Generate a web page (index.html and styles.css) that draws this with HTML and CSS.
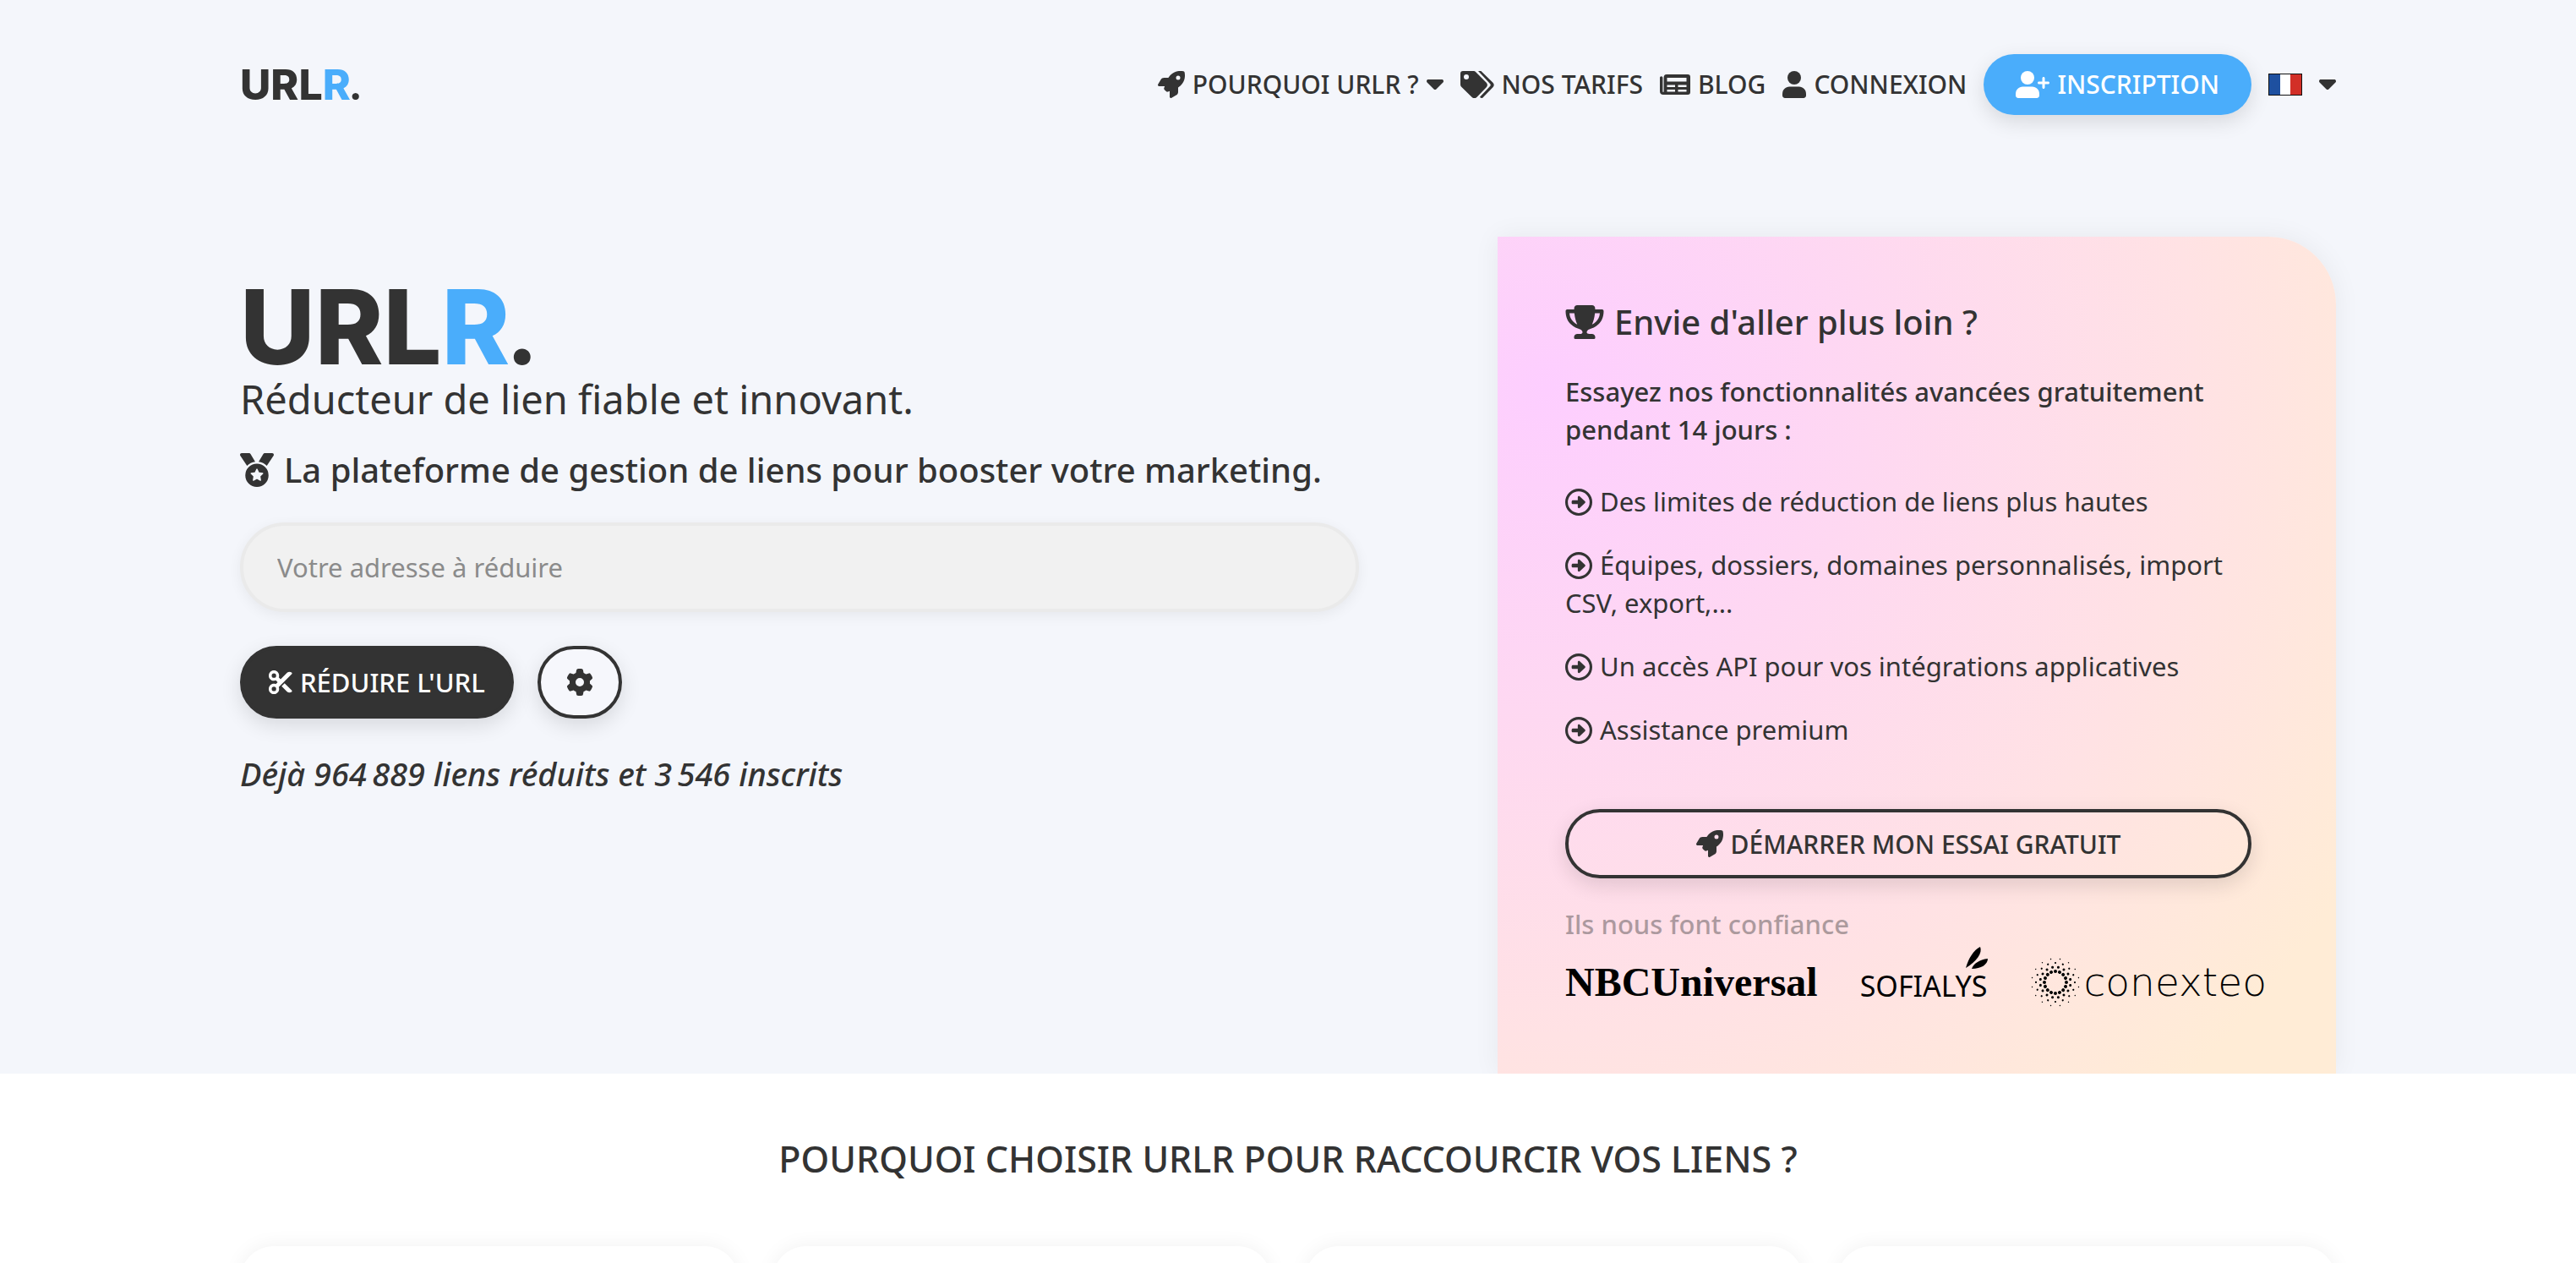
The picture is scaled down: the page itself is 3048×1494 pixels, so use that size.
FILE: index.html
```html
<!DOCTYPE html>
<html lang="fr">
<head>
<meta charset="utf-8">
<meta name="viewport" content="width=device-width, initial-scale=1">
<title>URLR — Réducteur de lien fiable et innovant</title>
<link rel="stylesheet" href="styles.css">
</head>
<body>
<svg class="sprite" aria-hidden="true">
  <symbol id="rocket" viewBox="0 0 512 512"><path d="M156.600 384.900L125.700 354c-8.500-8.500-11.500-20.800-7.700-32.200c3-8.900 7-20.500 11.800-33.800L24 288c-8.600 0-16.600-4.600-20.900-12.100s-4.200-16.700 .2-24.100l52.500-88.500c13-21.900 36.500-35.300 61.900-35.300l82.300 0c2.400-4 4.800-7.700 7.200-11.300C289.100-4.100 411.100-8.100 483.900 5.300c11.600 2.100 20.600 11.200 22.800 22.800c13.400 72.900 9.300 194.800-111.400 276.700c-3.500 2.400-7.300 4.800-11.300 7.200v82.300c0 25.400-13.400 49-35.300 61.900l-88.500 52.500c-7.400 4.400-16.600 4.500-24.100 .2s-12.100-12.200-12.100-20.900V380.800c-14.100 4.900-26.400 8.900-35.700 11.900c-11.200 3.600-23.400 .5-31.800-7.800zM384 168a40 40 0 1 0 0-80 40 40 0 1 0 0 80z"/></symbol>
  <symbol id="caret" viewBox="0 0 320 192"><path d="M137.400 182.600c12.500 12.500 32.800 12.500 45.300 0l128-128c9.200-9.200 11.900-22.900 6.900-34.900S301 0 288 0H32C19.100 0 7.400 7.800 2.400 19.800s-2.200 25.700 6.900 34.900z"/></symbol>
  <symbol id="tags" viewBox="0 0 40 32"><path fill-rule="evenodd" d="M3 0h12c1.500 0 2.500.4 3.500 1.400l12 12c1.900 1.900 1.900 4.300 0 6.200L19.600 30.800c-1.900 1.900-4.300 1.900-6.200 0L1.400 19C.4 18 0 17 0 15.500V3c0-2 1-3 3-3zm4 4a3 3 0 1 0 0 6 3 3 0 0 0 0-6z"/><path d="M21 0h3.400l13.800 13.500c2 2 2 4.100 0 6.100L26.500 31.400c-1 1-3 .6-3.500-.6L35 18c1-1 1-2 0-3z"/></symbol>
  <symbol id="news" viewBox="0 0 36 24"><path fill-rule="evenodd" d="M8 0h25c2 0 3 1 3 3v18c0 2-1 3-3 3H4c-2.500 0-4-1.500-4-4V4c0-1 .8-1.700 1.700-1.700S3.400 3 3.400 4v16c0 .7.200 1 .6 1s.6-.3.600-1V4c0-2.500 1-4 3.400-4zM8.500 4v4.500h23V4zm0 8.500V15h9.500v-2.500zm13 0V15h10v-2.500zM8.500 18v2.500h9.500V18zm13 0v2.500h10V18z"/></symbol>
  <symbol id="user" viewBox="0 0 448 512"><circle cx="224" cy="128" r="128"/><path d="M134 296h180c74 0 134 60 134 134v34c0 26.500-21.500 48-48 48H48c-26.500 0-48-21.500-48-48v-34c0-74 60-134 134-134z"/></symbol>
  <symbol id="user-plus" viewBox="0 0 640 512"><circle cx="224" cy="128" r="128"/><path d="M134 296h180c74 0 134 60 134 134v34c0 26.500-21.500 48-48 48H48c-26.500 0-48-21.500-48-48v-34c0-74 60-134 134-134z"/><path d="M504 312V248H440c-13.300 0-24-10.700-24-24s10.700-24 24-24h64V136c0-13.300 10.700-24 24-24s24 10.700 24 24v64h64c13.300 0 24 10.700 24 24s-10.700 24-24 24H552v64c0 13.300-10.700 24-24 24s-24-10.700-24-24z"/></symbol>
  <symbol id="medal" viewBox="0 0 512 512"><path d="M4.100 38.200C1.400 34.200 0 29.400 0 24.600C0 11 11 0 24.600 0H133.900c11.200 0 21.700 5.900 27.400 15.500l68.500 114.100c-48.200 6.100-91.300 28.600-123.400 61.900L4.100 38.200zm503.700 0L405.600 191.500c-32.100-33.300-75.200-55.800-123.400-61.900L350.700 15.500C356.500 5.900 366.900 0 378.100 0H487.400C501 0 512 11 512 24.600c0 4.800-1.400 9.600-4.100 13.600zM80 336a176 176 0 1 1 352 0A176 176 0 1 1 80 336zm184.400-94.900c-3.400-7-13.300-7-16.800 0l-22.400 45.400c-1.400 2.800-4 4.700-7 5.100L168 298.900c-7.700 1.100-10.700 10.500-5.200 16l36.300 35.400c2.200 2.200 3.200 5.200 2.700 8.300l-8.600 49.900c-1.300 7.600 6.700 13.500 13.600 9.900l44.800-23.600c2.700-1.400 6-1.400 8.700 0l44.800 23.600c6.900 3.600 14.900-2.200 13.600-9.900l-8.600-49.900c-.5-3 .5-6.100 2.700-8.300l36.300-35.400c5.600-5.400 2.500-14.800-5.200-16l-50.100-7.300c-3-.4-5.700-2.400-7-5.100z"/></symbol>
  <symbol id="scissors" viewBox="0 0 512 512"><path fill-rule="evenodd" d="M256 192l-39.500-39.500c4.900-12.600 7.500-26.200 7.500-40.500C224 50.100 173.900 0 112 0S0 50.100 0 112s50.100 112 112 112c14.300 0 27.900-2.700 40.500-7.500L192 256l-39.500 39.500c-12.600-4.900-26.200-7.500-40.500-7.500C50.100 288 0 338.100 0 400s50.100 112 112 112s112-50.100 112-112c0-14.300-2.700-27.900-7.500-40.500L499.200 76.800c7.100-7.100 7.100-18.500 0-25.600c-28.300-28.300-74.100-28.300-102.400 0zm22.600 150.600L396.800 460.800c28.300 28.300 74.100 28.300 102.400 0c7.100-7.100 7.100-18.500 0-25.600L342.600 278.600zM64 112a48 48 0 1 1 96 0 48 48 0 1 1-96 0zm48 240a48 48 0 1 1 0 96 48 48 0 1 1 0-96z"/></symbol>
  <symbol id="gear" viewBox="0 0 512 512"><path d="M495.900 166.600c3.200 8.700 .5 18.400-6.400 24.600l-43.300 39.400c1.100 8.300 1.700 16.800 1.700 25.400s-.6 17.100-1.700 25.400l43.300 39.400c6.900 6.200 9.600 15.900 6.400 24.600c-4.400 11.900-9.700 23.300-15.800 34.300l-4.700 8.100c-6.600 11-14 21.400-22.100 31.200c-5.900 7.200-15.700 9.600-24.500 6.800l-55.700-17.700c-13.400 10.300-28.200 18.900-44 25.400l-12.500 57.100c-2 9.100-9 16.300-18.200 17.800c-13.800 2.300-28 3.500-42.500 3.500s-28.700-1.200-42.500-3.500c-9.200-1.500-16.200-8.700-18.200-17.800l-12.500-57.100c-15.800-6.500-30.600-15.100-44-25.400L83.100 425.900c-8.800 2.800-18.600 .3-24.500-6.800c-8.100-9.800-15.500-20.200-22.100-31.200l-4.700-8.100c-6.100-11-11.400-22.400-15.800-34.300c-3.200-8.700-.5-18.400 6.400-24.600l43.300-39.400C64.600 273.100 64 264.600 64 256s.6-17.100 1.700-25.400L22.400 191.200c-6.900-6.200-9.600-15.900-6.400-24.600c4.400-11.900 9.700-23.300 15.800-34.300l4.700-8.100c6.600-11 14-21.400 22.100-31.200c5.900-7.200 15.700-9.600 24.500-6.800l55.700 17.700c13.400-10.300 28.200-18.900 44-25.400l12.500-57.100c2-9.100 9-16.300 18.200-17.800C227.300 1.200 241.500 0 256 0s28.700 1.200 42.500 3.500c9.200 1.500 16.200 8.700 18.200 17.800l12.500 57.100c15.800 6.500 30.600 15.100 44 25.400l55.700-17.700c8.800-2.800 18.600-.3 24.500 6.800c8.100 9.800 15.500 20.200 22.100 31.200l4.700 8.100c6.100 11 11.400 22.400 15.800 34.300zM256 336a80 80 0 1 0 0-160 80 80 0 1 0 0 160z"/></symbol>
  <symbol id="trophy" viewBox="0 0 576 512"><path d="M400 0H176c-26.500 0-48.100 21.800-47.100 48.200c.2 5.300 .4 10.600 .7 15.800H24C10.700 64 0 74.700 0 88c0 92.600 33.500 157 78.500 200.700c44.300 43.100 98.300 64.800 138.100 75.800c23.400 6.500 39.400 26 39.400 45.600c0 20.900-17 25-37.900 25H180c-30 0-52 20-52 45v16c0 10 7 16 16 16H432c9 0 16-6 16-16v-16c0-25-22-45-52-45H357.900C337 435 320 431 320 410.100c0-19.600 15.900-39.200 39.400-45.600c39.900-11 93.900-32.700 138.200-75.800C542.500 245 576 180.600 576 88c0-13.300-10.700-24-24-24H446.400c.3-5.200 .5-10.400 .7-15.800C448.100 21.800 426.500 0 400 0zM58 122h74c9.100 80 26 130 44 168c-20-11-40-22-60-42c-32-31-54-66-58-126zM460 248c-20 20-40 31-60 42c18-38 35-88 44-168h74c-4 60-26 95-58 126z"/></symbol>
  <symbol id="arrow" viewBox="0 0 512 512"><path fill-rule="evenodd" d="M256 0a256 256 0 1 1 0 512 256 256 0 0 1 0-512zm0 50a206 206 0 1 0 0 412 206 206 0 0 0 0-412z"/><path d="M276 148l98 92c10 9 10 23 0 32l-98 92c-15 14-38 6-38-16v-56H148c-15 0-26-11-26-26v-20c0-15 11-26 26-26h90v-56c0-22 23-30 38-16z"/></symbol>
</svg>

<div class="hero">
  <header class="topbar wrap">
    <a class="logo logo-small" href="#">URL<span class="logo-accent">R</span><span class="logo-dot">.</span></a>
    <nav class="nav" aria-label="Navigation principale">
      <a class="nav-link" href="#"><svg class="icon"><use href="#rocket"/></svg>POURQUOI URLR ?<svg class="caret"><use href="#caret"/></svg></a>
      <a class="nav-link" href="#"><svg class="icon icon-wide"><use href="#tags"/></svg>NOS TARIFS</a>
      <a class="nav-link" href="#"><svg class="icon icon-news"><use href="#news"/></svg>BLOG</a>
      <a class="nav-link" href="#"><svg class="icon icon-narrow"><use href="#user"/></svg>CONNEXION</a>
      <a class="nav-link signup" href="#"><svg class="icon icon-wide"><use href="#user-plus"/></svg>INSCRIPTION</a>
      <a class="lang" href="#" aria-label="Français"><svg class="flag" viewBox="0 0 40 26"><rect width="40" height="26" fill="#111"/><rect x="1" y="1" width="13" height="24" fill="#1e50a0"/><rect x="14" y="1" width="12" height="24" fill="#fff"/><rect x="26" y="1" width="13" height="24" fill="#d22f27"/></svg><svg class="caret"><use href="#caret"/></svg></a>
    </nav>
  </header>

  <main class="intro wrap">
    <section class="shorten">
      <h1 class="heading"><span class="logo logo-big">URL<span class="logo-accent">R</span><span class="logo-dot">.</span></span><span class="tagline">Réducteur de lien fiable et innovant.</span></h1>
      <h2 class="pitch"><svg class="icon-pitch"><use href="#medal"/></svg>La plateforme de gestion de liens pour booster votre marketing.</h2>
      <form class="form">
        <input class="url" type="url" placeholder="Votre adresse à réduire" aria-label="Votre adresse à réduire">
        <div class="actions">
          <button class="btn btn-dark" type="button"><svg class="icon-cut"><use href="#scissors"/></svg>RÉDUIRE L'URL</button>
          <button class="btn btn-gear" type="button" aria-label="Options"><svg class="icon"><use href="#gear"/></svg></button>
        </div>
      </form>
      <p class="stats">Déjà 964&#8239;889 liens réduits et 3&#8239;546 inscrits</p>
    </section>

    <aside class="offer">
      <h2 class="offer-title"><svg class="icon-trophy"><use href="#trophy"/></svg>Envie d'aller plus loin ?</h2>
      <p class="offer-lead">Essayez nos fonctionnalités avancées gratuitement pendant 14 jours :</p>
      <ul class="perks">
        <li><svg class="icon-perk"><use href="#arrow"/></svg>Des limites de réduction de liens plus hautes</li>
        <li><svg class="icon-perk"><use href="#arrow"/></svg>Équipes, dossiers, domaines personnalisés, import CSV, export,...</li>
        <li><svg class="icon-perk"><use href="#arrow"/></svg>Un accès API pour vos intégrations applicatives</li>
        <li><svg class="icon-perk"><use href="#arrow"/></svg>Assistance premium</li>
      </ul>
      <a class="btn trial" href="#"><svg class="icon"><use href="#rocket"/></svg>DÉMARRER MON ESSAI GRATUIT</a>
      <p class="trust">Ils nous font confiance</p>
      <div class="brands">
        <span class="brand-nbc">NBCUniversal</span>
        <span class="brand-sofialys">SOFIALYS<svg class="leaves" viewBox="0 0 26 26"><path d="M0 25C3 14 9 4 17 0c3 7-4 17-17 25z"/><path d="M7 26c2-6 9-11 19-12c0 7-8 12-19 12z"/></svg></span>
        <span class="brand-conexteo"><svg class="burst" viewBox="-30 -30 60 60">
          <g fill="none" stroke="#000" stroke-linecap="round">
            <circle r="13" pathLength="32" stroke-width="4" stroke-dasharray="0.010 1.990"/>
            <circle r="18" pathLength="32" stroke-width="3" stroke-dasharray="0.010 1.990" stroke-dashoffset="1"/>
            <circle r="23" pathLength="32" stroke-width="2.200" stroke-dasharray="0.010 1.990"/>
            <circle r="28" pathLength="32" stroke-width="1.400" stroke-dasharray="0.010 1.990" stroke-dashoffset="1"/>
          </g></svg>conexteo</span>
      </div>
    </aside>
  </main>
</div>

<section class="why wrap">
  <h2 class="why-title">POURQUOI CHOISIR URLR POUR RACCOURCIR VOS LIENS ?</h2>
  <div class="cards">
    <article class="card"></article>
    <article class="card"></article>
    <article class="card"></article>
    <article class="card"></article>
  </div>
</section>
</body>
</html>
```
FILE: styles.css
```css
*, *::before, *::after { box-sizing: border-box; }

body {
  margin: 0;
  overflow-x: hidden;
  background: #fff;
  color: #333;
  font: 400 31px/45px "Noto Sans", "Open Sans", sans-serif;
}

h1, h2, p, ul { margin: 0; padding: 0; }
h1, h2 { font-weight: 500; }
ul { list-style: none; }
a { color: inherit; text-decoration: none; }
svg { fill: currentColor; flex: none; }

.sprite { position: absolute; width: 0; height: 0; }

.wrap {
  width: 100%;
  max-width: 2480px;
  margin: 0 auto;
}

.hero { background: #f4f6fb; overflow: hidden; }

/* Header */
.topbar {
  display: flex;
  align-items: center;
  justify-content: space-between;
  padding-top: 64px;
}

.logo {
  font-family: Inter, sans-serif;
  font-weight: 800;
  color: #333;
}
.logo-accent { color: #4aadfb; }
.logo-dot { font-family: Lato, sans-serif; font-weight: 900; line-height: 0; }
.logo-small { font-size: 50px; line-height: 72px; }
.logo-big { display: block; font-size: 122px; line-height: 114px; }

.nav { display: flex; align-items: center; gap: 20px; font-size: 30px; font-weight: 500; }
.nav-link { display: flex; align-items: center; gap: 9px; line-height: 72px; white-space: nowrap; }
.icon { width: 32px; height: 32px; }
.icon-wide { width: 40px; }
.icon-news { width: 36px; height: 24px; }
.icon-narrow { width: 28px; }
.caret { width: 20px; height: 12px; }

.signup {
  padding: 0 38px;
  border-radius: 36px;
  background: #4aadfb;
  color: #fff;
  box-shadow: 0 8px 24px rgba(0, 0, 0, .12);
}
.lang { display: flex; align-items: center; gap: 20px; }
.flag { width: 40px; height: 26px; }

/* Hero */
.intro {
  display: grid;
  grid-template-columns: 3fr 2fr;
  padding-top: 144px;
}
.shorten { padding: 50px 164px 0 0; }
.tagline { display: block; font-size: 47px; line-height: 56px; font-weight: 400; }
.pitch { display: flex; align-items: center; gap: 12px; margin-top: 26px; font-size: 40px; line-height: 60px; white-space: nowrap; }
.icon-pitch { width: 40px; height: 40px; }

.url {
  display: block;
  width: 100%;
  height: 106px;
  margin-top: 32px;
  padding: 0 40px;
  border: 4px solid #eaeaea;
  border-radius: 53px;
  background: #f1f1f1;
  color: #333;
  font: inherit;
  box-shadow: 0 4px 16px rgba(0, 0, 0, .06);
}
.url::placeholder { color: #8b8b8b; opacity: 1; }

.actions { display: flex; gap: 28px; margin-top: 40px; }
.btn {
  display: flex;
  align-items: center;
  justify-content: center;
  gap: 9px;
  border: 4px solid #333;
  border-radius: 43px;
  background: transparent;
  color: #333;
  font: 500 30px/45px "Noto Sans", "Open Sans", sans-serif;
  white-space: nowrap;
  box-shadow: 0 8px 24px rgba(0, 0, 0, .12);
}
.btn-dark { height: 86px; padding: 0 30px; background: #333; color: #fff; font-size: 31px; }
.icon-cut { width: 28px; height: 28px; }
.btn-gear { width: 100px; height: 86px; padding: 0; background: #f6f7fc; }
.stats { margin-top: 40px; font-size: 38px; line-height: 50px; font-style: italic; font-weight: 500; }

/* Offer card */
.offer {
  padding: 71px 100px 74px 80px;
  border-radius: 0 80px 0 0;
  background: radial-gradient(circle farthest-corner at 6% 18%, #fdceff 0%, #ffe2e4 62%, #ffecd6 90%);
  box-shadow: 0 0 32px rgba(0, 0, 0, .06);
}
.offer-title { display: flex; align-items: center; gap: 12px; font-size: 40px; line-height: 60px; }
.icon-trophy { width: 46px; height: 40px; }
.offer-lead { margin-top: 30px; font-weight: 500; }
.perks { display: grid; gap: 30px; margin-top: 40px; }
.icon-perk { width: 32px; height: 32px; margin-right: 9px; vertical-align: -5px; }
.trial { height: 82px; margin-top: 71px; }
.trust { margin-top: 32px; color: #333; opacity: .4; font-weight: 500; }
.brands { display: flex; align-items: center; margin: 12px -20px 0 0; color: #000; white-space: nowrap; line-height: 60px; }
.brand-nbc { font-family: "Liberation Serif", serif; font-size: 48px; font-weight: 700; }
.brand-sofialys { position: relative; margin-left: 50px; font-size: 34px; padding-top: 8px; }
.leaves { position: absolute; right: 0; top: -8px; width: 26px; height: 26px; }
.brand-conexteo { display: flex; align-items: center; gap: 4px; margin-left: 50px; font-family: "DejaVu Sans", sans-serif; font-size: 47px; font-weight: 200; }
.burst { width: 60px; height: 60px; }

/* Why */
.why { padding-top: 69px; }
.why-title { font-size: 43px; line-height: 64px; text-align: center; }
.cards { display: grid; grid-template-columns: repeat(4, 1fr); gap: 40px; margin-top: 71px; }
.card { min-height: 480px; border-radius: 40px; background: #fff; box-shadow: 0 0 24px rgba(0, 0, 0, .06); }
```
